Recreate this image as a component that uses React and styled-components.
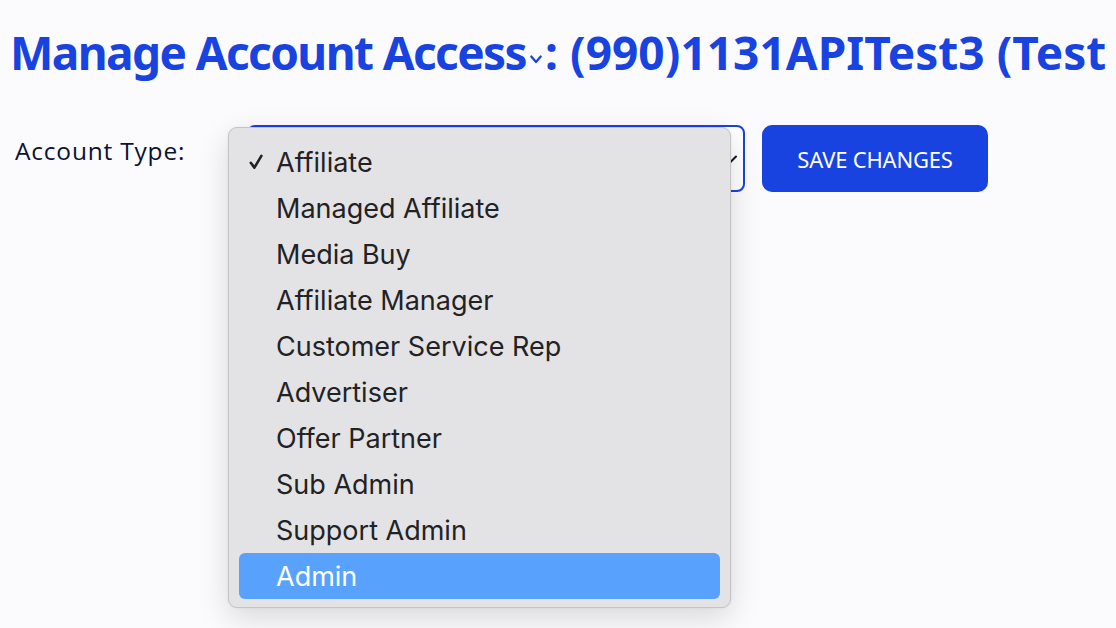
import React from "react";
import styled, { createGlobalStyle } from "styled-components";

const accountTypes = [
  "Affiliate",
  "Managed Affiliate",
  "Media Buy",
  "Affiliate Manager",
  "Customer Service Rep",
  "Advertiser",
  "Offer Partner",
  "Sub Admin",
  "Support Admin",
  "Admin",
];

export default function App() {
  const selected = "Affiliate";
  const highlighted = "Admin";
  return (
    <>
      <GlobalStyle />
      <Page>
        <Title>
          <TitlePart $spacing="-1.6px">Manage Account Access</TitlePart>
          <TitleChevron viewBox="0 0 12 9">
            <path d="M1.3 1.5 L6 7 L10.7 1.5" />
          </TitleChevron>
          <TitlePart $spacing="0.05px">: (990)1131APITest3 (Test</TitlePart>
        </Title>
        <FormRow>
          <Label>Account Type:</Label>
          <SelectWrap>
            <SelectBox>
              <SelectChevron viewBox="0 0 14 10">
                <path d="M2 2.5 L7 7.5 L12 2.5" />
              </SelectChevron>
            </SelectBox>
            <Popup>
              {accountTypes.map((type) => (
                <Option key={type} $active={type === highlighted}>
                  {type === selected && (
                    <Check viewBox="0 0 14 16">
                      <path d="M1.8 8.8 L5.4 13.6 L12.4 1.8" />
                    </Check>
                  )}
                  {type}
                </Option>
              ))}
            </Popup>
          </SelectWrap>
          <SaveButton>Save Changes</SaveButton>
        </FormRow>
      </Page>
    </>
  );
}

const GlobalStyle = createGlobalStyle`
  html, body {
    margin: 0;
    padding: 0;
    background: #fbfbfd;
  }
  body {
    font-family: "Noto Sans", "Open Sans", sans-serif;
  }
`;

const Page = styled.div`
  width: 1116px;
  height: 628px;
  overflow: hidden;
  position: relative;
`;

const Title = styled.h1`
  margin: 0;
  padding: 22px 0 0 10px;
  font-family: "Noto Sans", sans-serif;
  font-size: 46px;
  font-weight: 700;
  line-height: 60px;
  color: #1843e0;
  white-space: nowrap;
`;

const TitlePart = styled.span`
  letter-spacing: ${(p) => p.$spacing};
`;

const TitleChevron = styled.svg`
  width: 12px;
  height: 9px;
  margin: 0 3px 0 4px;
  vertical-align: 6px;
  fill: none;
  stroke: #1843e0;
  stroke-width: 2.2;
  stroke-linecap: round;
  stroke-linejoin: round;
`;

const FormRow = styled.div`
  display: flex;
  align-items: flex-start;
  margin-top: 43px;
  padding-left: 15px;
`;

const Label = styled.div`
  width: 232px;
  padding-top: 9px;
  font-family: "Open Sans", "Noto Sans", sans-serif;
  font-size: 24.5px;
  letter-spacing: 0.8px;
  color: #0b1233;
`;

const SelectWrap = styled.div`
  position: relative;
`;

const SelectBox = styled.div`
  width: 498px;
  height: 67px;
  box-sizing: border-box;
  border: 2px solid #1843e0;
  border-radius: 8px;
  background: #ffffff;
  display: flex;
  align-items: center;
  justify-content: flex-end;
  padding-right: 5px;
`;

const SelectChevron = styled.svg`
  width: 14px;
  height: 10px;
  fill: none;
  stroke: #111827;
  stroke-width: 2;
  stroke-linecap: round;
`;

const Popup = styled.div`
  position: absolute;
  left: -19px;
  top: 2px;
  width: 503px;
  height: 481px;
  box-sizing: border-box;
  padding: 11px 10px 9px;
  background: #e3e3e5;
  border: 1px solid #c4c4c6;
  border-radius: 9px;
  box-shadow: 0 10px 30px rgba(0, 0, 0, 0.14), 0 0 2px rgba(0, 0, 0, 0.08);
  display: flex;
  flex-direction: column;
`;

const Option = styled.div`
  position: relative;
  flex: 0 0 46px;
  display: flex;
  align-items: center;
  padding-left: 37px;
  border-radius: 6px;
  font-family: "Inter", "Noto Sans", sans-serif;
  font-size: 27px;
  color: ${(p) => (p.$active ? "#ffffff" : "#222224")};
  background: ${(p) => (p.$active ? "#58a2fd" : "transparent")};
`;

const Check = styled.svg`
  position: absolute;
  left: 10px;
  top: 15px;
  width: 14px;
  height: 16px;
  fill: none;
  stroke: #222224;
  stroke-width: 2.6;
  stroke-linecap: round;
  stroke-linejoin: round;
`;

const SaveButton = styled.button`
  margin-left: 17px;
  width: 226px;
  height: 67px;
  border: none;
  border-radius: 10px;
  background: #1843e0;
  color: #ffffff;
  font-family: "Noto Sans", sans-serif;
  font-size: 22px;
  text-transform: uppercase;
  letter-spacing: -0.2px;
  cursor: pointer;
`;
